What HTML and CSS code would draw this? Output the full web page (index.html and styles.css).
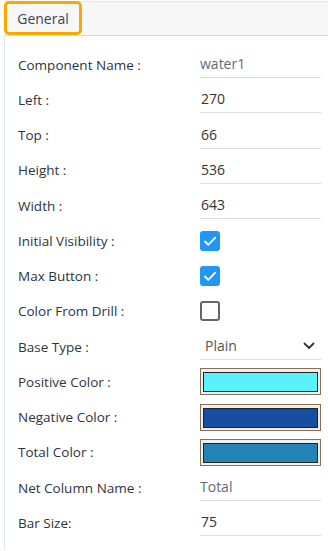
FILE: index.html
```html
<!DOCTYPE html>
<html lang="en">
<head>
    <meta charset="UTF-8">
    <meta name="viewport" content="width=device-width, initial-scale=1.0">
    <title>General Properties</title>
    <link rel="stylesheet" href="styles.css">
</head>
<body>
    <div class="panel">
        <div class="tabs">
            <div class="tab active">General</div>
        </div>

        <div class="form">
            <div class="row">
                <label>Component Name :</label>
                <div class="field muted">water1</div>
            </div>
            <div class="row">
                <label>Left :</label>
                <div class="field">270</div>
            </div>
            <div class="row">
                <label>Top :</label>
                <div class="field">66</div>
            </div>
            <div class="row">
                <label>Height :</label>
                <div class="field">536</div>
            </div>
            <div class="row">
                <label>Width :</label>
                <div class="field">643</div>
            </div>
            <div class="row">
                <label>Initial Visibility :</label>
                <div><span class="check checked"><svg viewBox="0 0 20 20" width="20" height="20"><path d="M5 10.5l3.3 3.3L15.2 6.6" fill="none" stroke="#fff" stroke-width="1.8" stroke-linecap="round" stroke-linejoin="round"/></svg></span></div>
            </div>
            <div class="row">
                <label>Max Button :</label>
                <div><span class="check checked"><svg viewBox="0 0 20 20" width="20" height="20"><path d="M5 10.5l3.3 3.3L15.2 6.6" fill="none" stroke="#fff" stroke-width="1.8" stroke-linecap="round" stroke-linejoin="round"/></svg></span></div>
            </div>
            <div class="row">
                <label>Color From Drill :</label>
                <div><span class="check"></span></div>
            </div>
            <div class="row">
                <label>Base Type :</label>
                <div class="field select">
                    <span>Plain</span>
                    <svg viewBox="0 0 12 8" width="12" height="8"><path d="M1.5 1.5L6 6l4.5-4.5" fill="none" stroke="#333" stroke-width="1.8" stroke-linecap="round" stroke-linejoin="round"/></svg>
                </div>
            </div>
            <div class="row">
                <label>Positive Color :</label>
                <div class="color-box"><span class="swatch" style="background: #5af1fb;"></span></div>
            </div>
            <div class="row">
                <label>Negative Color :</label>
                <div class="color-box"><span class="swatch" style="background: #164fa1;"></span></div>
            </div>
            <div class="row">
                <label>Total Color :</label>
                <div class="color-box"><span class="swatch" style="background: #2383b6;"></span></div>
            </div>
            <div class="row">
                <label>Net Column Name :</label>
                <div class="field muted">Total</div>
            </div>
            <div class="row">
                <label>Bar Size:</label>
                <div class="field">75</div>
            </div>
        </div>
    </div>
</body>
</html>
```

FILE: styles.css
```css
body {
    margin: 0;
    padding-top: 1px;
    font-family: "Open Sans", "Noto Sans", sans-serif;
    color: #333;
    background: #fff;
}

.panel {
    margin-left: 4px;
    border-left: 1px solid #e3e8ee;
    min-height: 549px;
}

.tabs {
    display: flex;
    height: 35px;
    background: #f7f7f7;
    border-top: 1px solid #e4e8ec;
    border-bottom: 1px solid #d9d9d9;
    box-sizing: border-box;
    margin-left: -1px;
}

.tab {
    display: flex;
    align-items: center;
    box-sizing: border-box;
    height: 34px;
    margin-top: -1px;
    padding: 0 10px;
    width: 78px;
    justify-content: center;
    font-size: 14px;
    color: #3d4450;
}

.tab.active {
    border: 3px solid #f8a900;
    border-radius: 5px;
}

.form {
    padding-top: 11px;
    padding-left: 13px;
}

.row {
    display: grid;
    grid-template-columns: 182px 121px;
    align-items: center;
    height: 35.25px;
}

.row label {
    font-size: 13.5px;
    color: #2f333a;
}

.field {
    height: 26px;
    line-height: 26px;
    border-bottom: 1px solid #dcdcdc;
    font-size: 14px;
    color: #333;
    padding-left: 1px;
}

.field.muted {
    color: #5f6b7a;
    padding-left: 0;
}

.select {
    display: flex;
    justify-content: space-between;
    align-items: center;
    padding: 0 6px 0 5px;
    color: #555;
}

.check {
    display: block;
    width: 20px;
    height: 20px;
    box-sizing: border-box;
    border: 2px solid #666;
    border-radius: 3px;
}

.check.checked {
    border: none;
    background: #2196f3;
}

.check svg {
    display: block;
}

.color-box {
    height: 27px;
    box-sizing: border-box;
    border: 1px solid #8b6e56;
    background: #efefef;
    padding: 3px 2px 2px;
    display: flex;
}

.swatch {
    flex: 1;
    border: 1px solid #222;
}
```
